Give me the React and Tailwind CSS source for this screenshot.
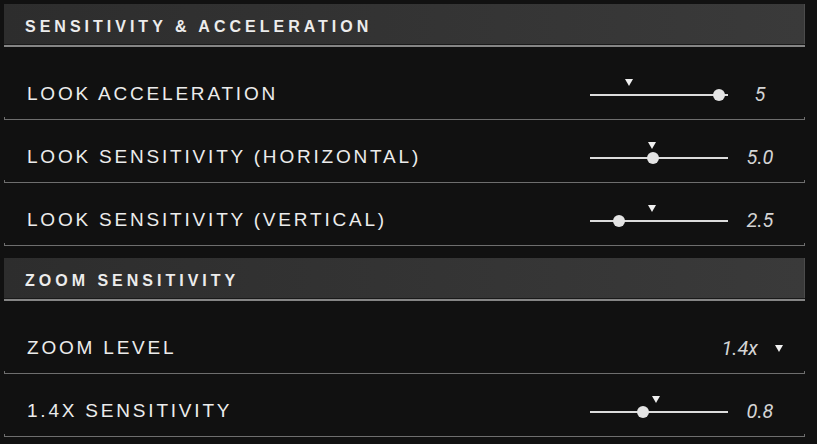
import React from "react";

const labelFont = { fontFamily: '"Liberation Sans", Arial, sans-serif' };
const valueFont = { fontFamily: 'Roboto, "Liberation Sans", sans-serif' };

function Header({ title }) {
  return (
    <div>
      <div
        className="h-[40px] flex items-center pl-[21px] pt-[5px] bg-gradient-to-r from-[#2d2d2d] to-[#3a3a3a] border-r border-[#4c4c4c] text-[#ececec] text-[16px] font-bold tracking-[4px]"
        style={labelFont}
      >
        {title}
      </div>
      <div className="h-[1px] bg-[#1a1a1a]" />
      <div className="h-[2px] bg-[#858585]" />
    </div>
  );
}

function Divider() {
  return <div className="h-[3px] border-b border-l border-r border-[#6e6e6e]" />;
}

function Tri({ className = "" }) {
  return (
    <svg width="8" height="7" viewBox="0 0 8 7" className={className}>
      <polygon points="0,0 8,0 4,7" fill="#f0f0f0" />
    </svg>
  );
}

function Slider({ thumb, marker }) {
  return (
    <div className="relative w-[138px] h-[30px]">
      <div className="absolute left-0 right-0 top-[19px] h-[2px] bg-[#dcdcdc]" />
      <div
        className="absolute top-[14px] w-[12px] h-[12px] rounded-full bg-[#e4e4e4]"
        style={{ left: thumb - 6 }}
      />
      <div className="absolute top-[4px]" style={{ left: marker - 4 }}>
        <Tri className="block" />
      </div>
    </div>
  );
}

function Row({ label, children }) {
  return (
    <div>
      <div className="h-[60px] pt-[14px] flex items-center pl-[23px] pr-[23px]">
        <div
          className="flex-1 text-[19px] tracking-[2.8px] text-[#ececec]"
          style={labelFont}
        >
          {label}
        </div>
        {children}
      </div>
      <Divider />
    </div>
  );
}

function SliderRow({ label, value, thumb, marker }) {
  return (
    <Row label={label}>
      <div className="flex items-center mt-[-8px]">
        <Slider thumb={thumb} marker={marker} />
        <div
          className="w-[44px] ml-[10px] text-center italic font-normal text-[20px] text-[#d4d4d4] mt-[8px]"
          style={valueFont}
        >
          {value}
        </div>
      </div>
    </Row>
  );
}

export default function App() {
  return (
    <div className="w-[817px] h-[444px] bg-[#111111] overflow-hidden pt-[4px] pl-[4px] pr-[12px]">
      <Header title="SENSITIVITY & ACCELERATION" />
      <div className="mt-[10px]">
        <SliderRow label="LOOK ACCELERATION" value="5" thumb={129} marker={39} />
        <SliderRow label="LOOK SENSITIVITY (HORIZONTAL)" value="5.0" thumb={63} marker={62} />
        <SliderRow label="LOOK SENSITIVITY (VERTICAL)" value="2.5" thumb={29} marker={62} />
      </div>
      <div className="mt-[12px]">
        <Header title="ZOOM SENSITIVITY" />
      </div>
      <div className="mt-[10px]">
        <Row label="ZOOM LEVEL">
          <div className="flex items-center">
            <span
              className="italic font-normal text-[20px] text-[#d4d4d4]"
              style={valueFont}
            >
              1.4x
            </span>
            <Tri className="ml-[17px] mr-[-1px]" />
          </div>
        </Row>
        <SliderRow label="1.4X SENSITIVITY" value="0.8" thumb={53} marker={66} />
      </div>
    </div>
  );
}
